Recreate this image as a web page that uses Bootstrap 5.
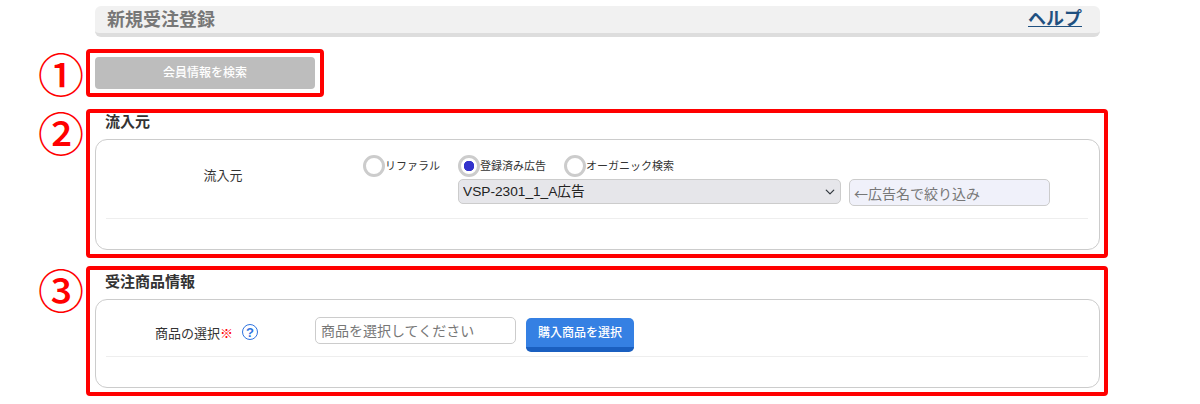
<!DOCTYPE html>
<html lang="ja">
<head>
<meta charset="utf-8">
<title>新規受注登録</title>
<link href="https://cdn.jsdelivr.net/npm/bootstrap@5.3.0/dist/css/bootstrap.min.css" rel="stylesheet">
<style>
html,body{height:404px;overflow:hidden;background:#fff}
body{font-family:"Liberation Sans","Noto Sans CJK JP",sans-serif;color:#333;font-size:13px}
.pg{width:1005px;margin-left:95px;padding-top:6px}
.hd{height:31px;background:#f1f1f1;border-bottom:4px solid #ddd;border-radius:6px;padding:0 18px 0 12px}
.hd-title{font-size:18px;font-weight:700;color:#777;line-height:28px}
.hd-help{font-size:18px;font-weight:700;color:#1f5080;line-height:26px;height:24px;display:block}
.zone{position:relative}
.mark-box{position:absolute;border:4px solid #f00;border-radius:4px;pointer-events:none}
.mark-num{position:absolute;left:-57px;color:#f00;font-family:"Noto Sans CJK JP",sans-serif;font-size:46px;font-weight:500;line-height:46px;height:46px;width:46px;text-align:center}
.z1{margin-top:20px;width:220px}
.z1 .mark-box{inset:-8px -9px -8px -9px}
.z1 .mark-num{top:-8px}
.btn-member{width:220px;height:32px;background:#bdbdbd;border:0;border-radius:4px;color:#fff;font-size:12px;font-weight:500;padding:0}
.z2{margin-top:24px}
.z2 .mark-box{inset:-4px -8px -8px -9px}
.z2 .mark-num{top:-5px}
.z3{margin-top:23px}
.z3 .mark-box{inset:-7px -8px -8px -9px}
.z3 .mark-num{top:-8px}
.legend-t{height:26px;padding-left:10px;font-size:15px;font-weight:700;line-height:18px}
.panel-box{border:1px solid #ccc;border-radius:12px;padding:0 11px 0 10px}
.p2{height:111px}
.p3{height:89px}
.line-a{height:79px;border-bottom:1px solid #eee}
.line-b{height:57px;border-bottom:1px solid #eee}
.lab-a{width:234px;text-align:center;padding-top:27px;line-height:18px}
.radio-area{padding-top:13px}
.radio-line{padding-left:23px;height:26px;font-size:11px}
.radio-pick{display:flex;align-items:center}
.radio-pick .form-check-input{width:22px;height:22px;margin:0;border:3px solid #ccc;background-color:#fff;background-image:none;position:relative;flex:none}
.radio-pick .form-check-input:checked{background-color:#fff;border-color:#ccc;background-image:radial-gradient(circle,#3333cc 0,#3333cc 5px,transparent 5.5px)}
.gap-a{margin-right:18px}
.pick-line{padding-left:118px}
.sel-ad{width:383px;height:25px;font-size:13.7px;color:#222;background-color:#e6e6ea;border-color:#ccc;border-radius:5px;padding:0 24px 0 4px;line-height:23px;background-position:right 4px center;background-size:12px 10px}
.inp-ad,.inp-item{height:27px;font-size:14px;border-color:#ccc;border-radius:5px;padding:0 5px;width:201px}
.inp-ad{background:#f0f1fa;margin-left:8px;padding-left:4px;font-family:"Noto Sans CJK JP",sans-serif}
.inp-ad::placeholder,.inp-item::placeholder{color:#777;opacity:1}
.lab-b{width:209px;padding:25px 0 0 49px;line-height:18px;white-space:nowrap;display:flex;align-items:flex-start}
.req{color:#f00}
.tip-q{display:flex;width:16px;height:16px;border:1.5px solid #2f74e0;border-radius:50%;color:#2f74e0;font-size:13px;font-weight:700;line-height:1;align-items:center;justify-content:center;margin:-1px 0 0 9px}
.inp-item{margin-top:17px}
.btn-buy{width:108px;height:34px;margin:18px 0 0 10px;background:#3580e3;border:0;border-bottom:5px solid #1a5fc0;border-radius:5px;color:#fff;font-size:12px;font-weight:500;padding:0}
</style>
</head>
<body>
<div class="pg">
  <div class="hd d-flex justify-content-between">
    <div class="hd-title">新規受注登録</div>
    <a href="#" class="hd-help">ヘルプ</a>
  </div>

  <div class="zone z1">
    <button type="button" class="btn-member d-block">会員情報を検索</button>
    <div class="mark-box"></div><div class="mark-num">①</div>
  </div>

  <div class="zone z2">
    <div class="legend-t">流入元</div>
    <div class="panel-box p2">
      <div class="line-a d-flex">
        <div class="lab-a">流入元</div>
        <div class="radio-area">
          <div class="radio-line d-flex">
            <label class="radio-pick gap-a"><input class="form-check-input" type="radio" name="src">リファラル</label>
            <label class="radio-pick gap-a"><input class="form-check-input" type="radio" name="src" checked>登録済み広告</label>
            <label class="radio-pick"><input class="form-check-input" type="radio" name="src">オーガニック検索</label>
          </div>
          <div class="pick-line d-flex">
            <select class="form-select sel-ad"><option>VSP-2301_1_A広告</option></select>
            <input class="form-control inp-ad" type="text" placeholder="←広告名で絞り込み">
          </div>
        </div>
      </div>
    </div>
    <div class="mark-box"></div><div class="mark-num">②</div>
  </div>

  <div class="zone z3">
    <div class="legend-t">受注商品情報</div>
    <div class="panel-box p3">
      <div class="line-b d-flex">
        <div class="lab-b"><span>商品の選択</span><span class="req">※</span><span class="tip-q">?</span></div>
        <input class="form-control inp-item" type="text" placeholder="商品を選択してください">
        <button type="button" class="btn-buy">購入商品を選択</button>
      </div>
    </div>
    <div class="mark-box"></div><div class="mark-num">③</div>
  </div>
</div>
<script src="https://cdn.jsdelivr.net/npm/bootstrap@5.3.0/dist/js/bootstrap.bundle.min.js"></script>
</body>
</html>
